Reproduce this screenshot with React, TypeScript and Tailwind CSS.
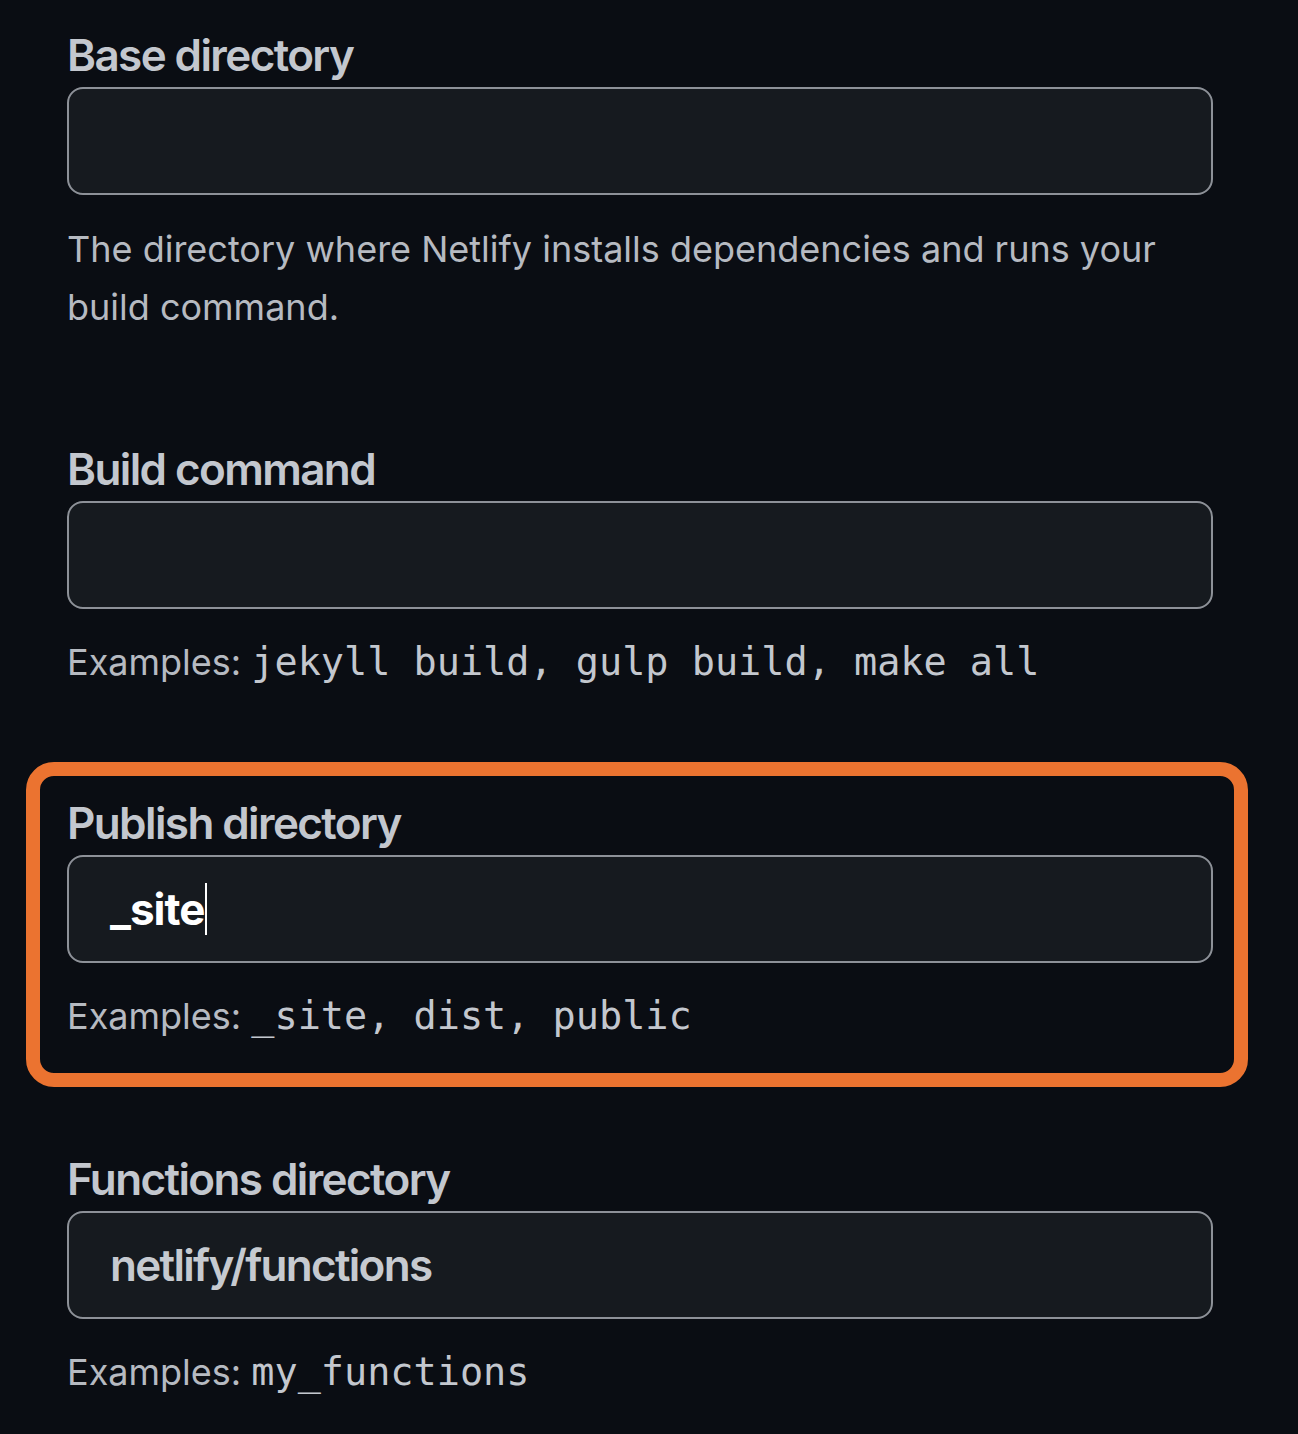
import React from 'react'

const sans = "font-['Inter','Noto_Sans',sans-serif]"
const mono = "font-['DejaVu_Sans_Mono','Liberation_Mono',monospace]"

type FieldProps = {
  label: string
  value?: string
  active?: boolean
  children: React.ReactNode
}

const Field: React.FC<FieldProps> = ({ label, value, active, children }) => (
  <div>
    <label className="block text-[44px] leading-[53px] font-semibold text-[#c3c7ce] tracking-[-1.6px]">
      {label}
    </label>
    <div className="mt-[5px] h-[108px] rounded-[16px] border-2 border-[#8d9198] bg-[#161a1f] flex items-center pl-[41px]">
      {value && (
        <span
          className={`text-[44px] ${
            active ? 'text-white font-bold tracking-[-1px]' : 'text-[#c6cad0] font-semibold tracking-[-1.7px]'
          }`}
        >
          {value}
        </span>
      )}
      {active && <span className="ml-[1px] w-[2px] h-[52px] bg-white" />}
    </div>
    {children}
  </div>
)

const Examples: React.FC<{ items: string }> = ({ items }) => (
  <p className="mt-[24px] text-[36px] leading-[57px] text-[#b6bac1]">
    Examples: <span className={`${mono} text-[38.5px] text-[#c3c7ce]`}>{items}</span>
  </p>
)

export default function App() {
  return (
    <div className={`${sans} w-full min-h-screen bg-[#0a0d13] pl-[67px] pr-[85px] pt-[29px] pb-[30px]`}>
      <Field label="Base directory">
        <p className="mt-[25px] text-[36px] leading-[58px] text-[#b6bac1]">
          The directory where Netlify installs dependencies and runs your build command.
        </p>
      </Field>

      <div className="mt-[107px]">
        <Field label="Build command">
          <Examples items="jekyll build, gulp build, make all" />
        </Field>
      </div>

      <div className="mt-[71px] -ml-[41px] -mr-[35px] border-[14px] border-[#eb7330] rounded-[28px] pt-[21px] pb-[28px] pl-[27px] pr-[21px]">
        <Field label="Publish directory" value="_site" active>
          <Examples items="_site, dist, public" />
        </Field>
      </div>

      <div className="mt-[66px]">
        <Field label="Functions directory" value="netlify/functions">
          <Examples items="my_functions" />
        </Field>
      </div>
    </div>
  )
}
